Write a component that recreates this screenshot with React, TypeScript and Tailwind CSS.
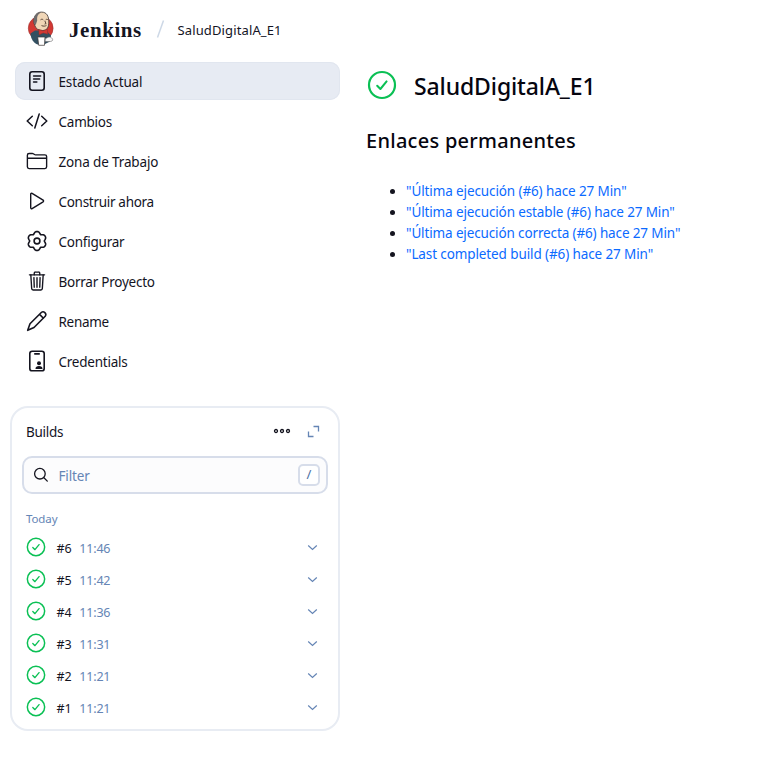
import React from "react";
import { IoFolderOutline, IoTrashOutline } from "react-icons/io5";

type IconProps = { className?: string };

const Stroke = ({ className = "size-[22px]", box = "0 0 22 22", width = 1.4, children }: { className?: string; box?: string; width?: number; children: React.ReactNode }) => (
  <svg className={className} viewBox={box} fill="none" stroke="currentColor" strokeWidth={width} strokeLinecap="round" strokeLinejoin="round">
    {children}
  </svg>
);

const DocumentIcon = () => (
  <Stroke width={1.6}>
    <rect x="3.8" y="1.8" width="14.4" height="18.4" rx="2.4" />
    <path d="M7.6 6h7M7.6 9h6M7.6 12h3.2" />
  </Stroke>
);

const CodeIcon = () => (
  <Stroke width={1.5}>
    <path d="M6.3 6.2 1.2 11l5.1 4.8M15.7 6.2l5.1 4.8-5.1 4.8M13.2 4 8.8 18" />
  </Stroke>
);

const PlayIcon = () => (
  <Stroke width={1.4}>
    <path d="M4.700 4.200v13.600c0 .8.700 1.200 1.400.8l11-6.800c.6-.4.6-1.200 0-1.600l-11-6.800c-.7-.4-1.400 0-1.400.8Z" />
  </Stroke>
);

// Outline of the six-lobed gear, sampled every five degrees.
const gearPoints = Array.from({ length: 72 }, (_, i) => {
  const a = (i * Math.PI) / 36;
  const c = Math.cos(6 * a);
  const r = 8.6 + 1.05 * c - 0.18 * Math.cos(12 * a);
  return `${(11 + r * Math.sin(a)).toFixed(2)},${(11 - r * Math.cos(a)).toFixed(2)}`;
}).join(" ");

const GearIcon = () => (
  <Stroke width={1.6}>
    <circle cx="11" cy="11" r="2.900" />
    <polygon points={gearPoints} />
  </Stroke>
);

const PencilIcon = () => (
  <Stroke width={1.6}>
    <path d="M1.700 20.300 4 13.800 15.300 2.500c2.400-2.100 5.800 1.300 3.900 3.700L8 17.500ZM13.600 4.400l3.800 3.800" />
  </Stroke>
);

const CredentialsIcon = () => (
  <Stroke width={1.6}>
    <rect x="3.800" y="1.200" width="14.400" height="19.600" rx="2.400" />
    <path d="M8.800 3.900h4.400" />
    <g fill="currentColor" stroke="none">
      <circle cx="13" cy="13.200" r="2" />
      <path d="M9.500 19c0-2.200 1.300-3 3.500-3s3.500.8 3.500 3Z" />
    </g>
  </Stroke>
);

const SearchIcon = () => (
  <Stroke className="mb-[1px] size-[16px]" box="0 0 16 16" width={1.3}>
    <circle cx="6.900" cy="6.700" r="5.300" />
    <path d="m10.900 10.700 3.400 3.400" />
  </Stroke>
);

const SuccessIcon = ({ className }: IconProps) => (
  <svg className={className} viewBox="0 0 30 30" fill="none" stroke="#0ac054" strokeLinecap="round" strokeLinejoin="round">
    <circle cx="15" cy="15" r="13" strokeWidth="2.200" />
    <path d="m10.200 15.700 3.200 3.300 6.200-7.600" strokeWidth="2" />
  </svg>
);

const JenkinsLogo = () => (
  <svg className="h-[35px] w-[28px]" viewBox="0 0 28 35">
    <ellipse cx="13.700" cy="17.200" rx="12.400" ry="12" fill="#d33833" stroke="#9c3432" strokeWidth=".6" />
    <path d="M3.500 22.500 8 19.500h11l5 5-1 6-6 3H10.500C6 31.500 4 28 3.500 22.500Z" fill="#335061" />
    <path d="M6.800 11.500C6.500 4.500 10 1 14.600 1.100c5.200 0 7.300 4.300 7.200 9.900 0 5-1.500 8.500-6.200 8.500-4 0-7-1.800-7.900-5.300Z" fill="#f0d6b7" stroke="#3a3433" strokeWidth=".8" />
    <path d="M7 12.500C5.800 5.500 9 1.200 14.500 1.200 10.800 3 9.800 5.200 10.200 9.500L8.700 14Z" fill="#6d6b6d" />
    <path d="M13.500 8.800c1-.8 2-.7 2.800 0M18.700 8.800c.8-.7 1.600-.6 2.300 0M17.800 9.800l1.200 2.800-1.400.5M14.500 14.600c2 .8 3.800.7 5-.3" fill="none" stroke="#49372b" strokeWidth=".9" />
    <path d="m11.800 18.500 4.200 1.300 4.300-1.600.6 5-4.700-1.200-4.200 1.900Z" fill="#d33833" stroke="#81302f" strokeWidth=".5" />
    <path d="M10.700 26h7.300l-.5 8.300h-5.800Z" fill="#fff" stroke="#3a3433" strokeWidth=".7" />
    <path d="M18.300 27.800c1.600-.4 2.600-2.200 4.800-1.700 2.300.7 3.300 2.900 1.900 3.900-1.600.8-4.300.7-6.900.3Z" fill="#f7f7f7" stroke="#6d6b6d" strokeWidth=".6" />
  </svg>
);

const tasks: { label: string; icon: React.ReactNode; text: string }[] = [
  { label: "Estado Actual", icon: <DocumentIcon />, text: "tracking-[-0.15px]" },
  { label: "Cambios", icon: <CodeIcon />, text: "tracking-[-0.24px]" },
  { label: "Zona de Trabajo", icon: <IoFolderOutline className="size-[22px]" />, text: "tracking-[-0.15px]" },
  { label: "Construir ahora", icon: <PlayIcon />, text: "tracking-[-0.3px]" },
  { label: "Configurar", icon: <GearIcon />, text: "tracking-[-0.24px]" },
  { label: "Borrar Proyecto", icon: <IoTrashOutline className="size-[22px]" />, text: "tracking-[-0.24px]" },
  { label: "Rename", icon: <PencilIcon />, text: "tracking-[-0.3px]" },
  { label: "Credentials", icon: <CredentialsIcon />, text: "tracking-[-0.24px]" },
];

const builds = [
  ["#6", "11:46"],
  ["#5", "11:42"],
  ["#4", "11:36"],
  ["#3", "11:31"],
  ["#2", "11:21"],
  ["#1", "11:21"],
];

const links = [
  { label: '"Última ejecución (#6) hace 27 Min"', text: "tracking-[-0.11px]" },
  { label: '"Última ejecución estable (#6) hace 27 Min"', text: "tracking-[-0.12px]" },
  { label: '"Última ejecución correcta (#6) hace 27 Min"', text: "tracking-[-0.13px]" },
  { label: '"Last completed build (#6) hace 27 Min"', text: "tracking-[-0.11px]" },
];

export default function App() {
  return (
    <div className="h-[772px] w-[782px] overflow-hidden bg-white font-['Noto_Sans',sans-serif] text-[13.500px] text-[#14141f]">
      <header className="flex h-[62px] items-start pl-[27px] pt-[11px]">
        <JenkinsLogo />
        <span className="ml-[14px] mt-[5px] w-[73px] font-['Liberation_Serif',serif] text-[21px] font-bold leading-[28px] tracking-[0.55px]">Jenkins</span>
        <svg className="ml-[14px] mt-[9px] h-[18px] w-[9px]" viewBox="0 0 9 18" stroke="#cdd8e6" strokeWidth="1.500">
          <path d="M1.500 17.500 7.500.5" />
        </svg>
        <span className="ml-[12.500px] mt-[8px] text-[13px] leading-[22px] tracking-[0.13px]">SaludDigitalA_E1</span>
      </header>
      <div className="flex">
        <aside className="w-[340px] shrink-0">
          <nav className="flex flex-col gap-[2px] pl-[15px]">
            {tasks.map((t, i) => (
              <a key={t.label} className={`flex h-[38px] items-center rounded-[10px] pl-[11px] ${i === 0 ? "bg-[#e7ebf3] ring-1 ring-inset ring-[#e1e6ef]" : ""}`}>
                <span className="flex w-[22px] justify-center pb-[1px]">{t.icon}</span>
                <span className={`ml-[10.500px] pt-[3px] ${t.text}`}>{t.label}</span>
              </a>
            ))}
          </nav>
          <section className="ml-[10px] mt-[26px] h-[325px] w-[330px] rounded-[18px] border-2 border-[#e8ecf3] px-[10px]">
            <div className="flex h-[48px] items-center pl-[4px] pr-[8px]">
              <span className="flex-1 pt-[1px] tracking-[-0.3px]">Builds</span>
              <svg className="mb-[2px] h-[6px] w-[18px]" viewBox="0 0 18 6" fill="none" stroke="currentColor" strokeWidth="1.300">
                <circle cx="3" cy="3" r="1.500" />
                <circle cx="9" cy="3" r="1.500" />
                <circle cx="15" cy="3" r="1.500" />
              </svg>
              <svg className="mb-[2px] ml-[16px] size-[13px]" viewBox="0 0 13 13" fill="none" stroke="#6585b5" strokeWidth="1.300">
                <path d="M6.500 1.500h5v5M1.500 6.500v5h5" />
              </svg>
            </div>
            <div className="flex h-[38px] items-center rounded-[10px] border-2 border-[#d7ddea] bg-[#fcfcfd] pl-[9px] pr-[6px]">
              <SearchIcon />
              <span className="ml-[9.500px] flex-1 pt-[2px] tracking-[-0.15px] text-[#6585b5]">Filter</span>
              <kbd className="flex size-[22px] items-center justify-center rounded-[5px] border-2 border-[#d7ddea] bg-white font-['Noto_Sans',sans-serif] text-[13px] text-[#4c6fa5]">/</kbd>
            </div>
            <div className="h-[37px] pl-[4px] pt-[15px] text-[11.500px] leading-[20px] tracking-[-0.1px] text-[#6585b5]">Today</div>
            {builds.map(([id, time]) => (
              <div key={id} className="flex h-[32px] items-center pl-[4px] pr-[10px]">
                <SuccessIcon className="size-[20px]" />
                <span className="ml-[10.500px] pt-[4px] text-[12.500px] tracking-[-0.2px]">{id}</span>
                <span className="ml-[8px] flex-1 pt-[4px] text-[12.500px] tracking-[-0.2px] text-[#6585b5]">{time}</span>
                <svg className="size-[11px]" viewBox="0 0 11 11" fill="none" stroke="#6585b5" strokeWidth="1.200">
                  <path d="m1.200 3.500 4.300 4 4.300-4" />
                </svg>
              </div>
            ))}
          </section>
        </aside>
        <main className="pl-[26px] pt-[7px]">
          <div className="flex h-[34px] items-center">
            <SuccessIcon className="mb-[2px] ml-[1px] size-[30px]" />
            <h1 className="ml-[17px] text-[23px] font-medium leading-[32px] tracking-[-0.12px] text-[#05050f]">SaludDigitalA_E1</h1>
          </div>
          <h2 className="mt-[22px] text-[20px] font-medium leading-[32px] tracking-[0.27px] text-[#05050f]">Enlaces permanentes</h2>
          <ul className="mt-[24px] list-disc pl-[40px]">
            {links.map((l) => (
              <li key={l.label} className="h-[21px] leading-[21px]">
                <a className={`text-[#0b6aff] ${l.text}`}>{l.label}</a>
              </li>
            ))}
          </ul>
        </main>
      </div>
    </div>
  );
}
